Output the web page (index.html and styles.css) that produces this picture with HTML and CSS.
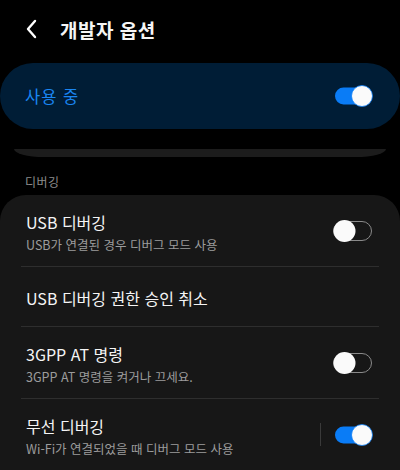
FILE: index.html
```html
<!DOCTYPE html>
<html lang="ko">
<head>
    <meta charset="UTF-8">
    <meta name="viewport" content="width=device-width, initial-scale=1.0">
    <title>개발자 옵션</title>
    <link rel="stylesheet" href="styles.css">
</head>
<body>
    <div class="header">
        <svg class="back" width="16" height="20" viewBox="0 0 16 20">
            <path d="M11 2 L4 10 L11 18" fill="none" stroke="#fff" stroke-width="2.4" stroke-linecap="round" stroke-linejoin="round"/>
        </svg>
        <h1>개발자 옵션</h1>
    </div>

    <div class="master">
        <span>사용 중</span>
        <svg class="switch" width="42" height="24" viewBox="0 0 42 24">
            <rect x="2" y="3.5" width="32" height="17" rx="8.5" fill="#0a7cf6"/>
            <circle cx="29" cy="12" r="10.5" fill="#fafafa" stroke="#0a7cf6" stroke-width="0.8"/>
        </svg>
    </div>

    <div class="peek"></div>

    <div class="section-label">디버깅</div>

    <div class="card">
        <div class="row tall">
            <div class="text">
                <div class="title">USB 디버깅</div>
                <div class="sub">USB가 연결된 경우 디버그 모드 사용</div>
            </div>
            <svg class="switch" width="42" height="24" viewBox="0 0 42 24">
                <rect x="0.5" y="2.5" width="38" height="19" rx="9.5" fill="none" stroke="#8a8a8a" stroke-width="1"/>
                <circle cx="11.5" cy="12" r="11" fill="#fafafa"/>
            </svg>
        </div>
        <div class="row">
            <div class="text">
                <div class="title">USB 디버깅 권한 승인 취소</div>
            </div>
        </div>
        <div class="row tall">
            <div class="text">
                <div class="title">3GPP AT 명령</div>
                <div class="sub">3GPP AT 명령을 켜거나 끄세요.</div>
            </div>
            <svg class="switch" width="42" height="24" viewBox="0 0 42 24">
                <rect x="0.5" y="2.5" width="38" height="19" rx="9.5" fill="none" stroke="#8a8a8a" stroke-width="1"/>
                <circle cx="11.5" cy="12" r="11" fill="#fafafa"/>
            </svg>
        </div>
        <div class="row tall">
            <div class="text">
                <div class="title">무선 디버깅</div>
                <div class="sub">Wi-Fi가 연결되었을 때 디버그 모드 사용</div>
            </div>
            <div class="vline"></div>
            <svg class="switch" width="42" height="24" viewBox="0 0 42 24">
                <rect x="2" y="3.5" width="32" height="17" rx="8.5" fill="#0a7cf6"/>
                <circle cx="29" cy="12" r="10.5" fill="#fafafa" stroke="#0a7cf6" stroke-width="0.8"/>
            </svg>
        </div>
    </div>
</body>
</html>
```

FILE: styles.css
```css
body {
    margin: 0;
    background-color: #000;
    color: #f5f5f5;
    font-family: "Noto Sans CJK KR", "Noto Sans", sans-serif;
    overflow: hidden;
}
.header {
    display: flex;
    align-items: center;
    height: 58px;
    padding-left: 24px;
}
.header h1 {
    margin: 0 0 0 20px;
    font-size: 19px;
    font-weight: 700;
    letter-spacing: 0.5px;
}
.master {
    display: flex;
    align-items: center;
    justify-content: space-between;
    height: 66px;
    margin-top: 5px;
    padding: 0 25px 0 25px;
    background-color: #001d36;
    border-radius: 33px;
}
.master span {
    color: #1a86f2;
    font-size: 16.5px;
    letter-spacing: 1px;
}
.peek {
    height: 8px;
    margin: 20px 14px 0 14px;
    background-color: #1c1c1c;
    border-radius: 0 0 30px 30px / 0 0 8px 8px;
}
.section-label {
    padding: 16px 0 0 25px;
    height: 22px;
    font-size: 12px;
    color: #8c8c8c;
    letter-spacing: 0.5px;
}
.card {
    padding: 0 21px;
    background-color: #171717;
    border-radius: 26px 26px 0 0;
}
.row {
    display: flex;
    align-items: center;
    height: 59px;
    padding: 0 4px 0 5px;
    border-bottom: 1px solid #2e2e2e;
}
.row.tall {
    height: 71px;
}
.text {
    flex: 1;
    padding-top: 2px;
}
.title {
    font-size: 16px;
    line-height: 22px;
}
.sub {
    margin-top: 3px;
    font-size: 12.5px;
    line-height: 17px;
    color: #9c9c9c;
}
.vline {
    width: 1px;
    height: 23px;
    margin-right: 12px;
    background-color: #3a3a3a;
}
.switch {
    display: block;
}
```
